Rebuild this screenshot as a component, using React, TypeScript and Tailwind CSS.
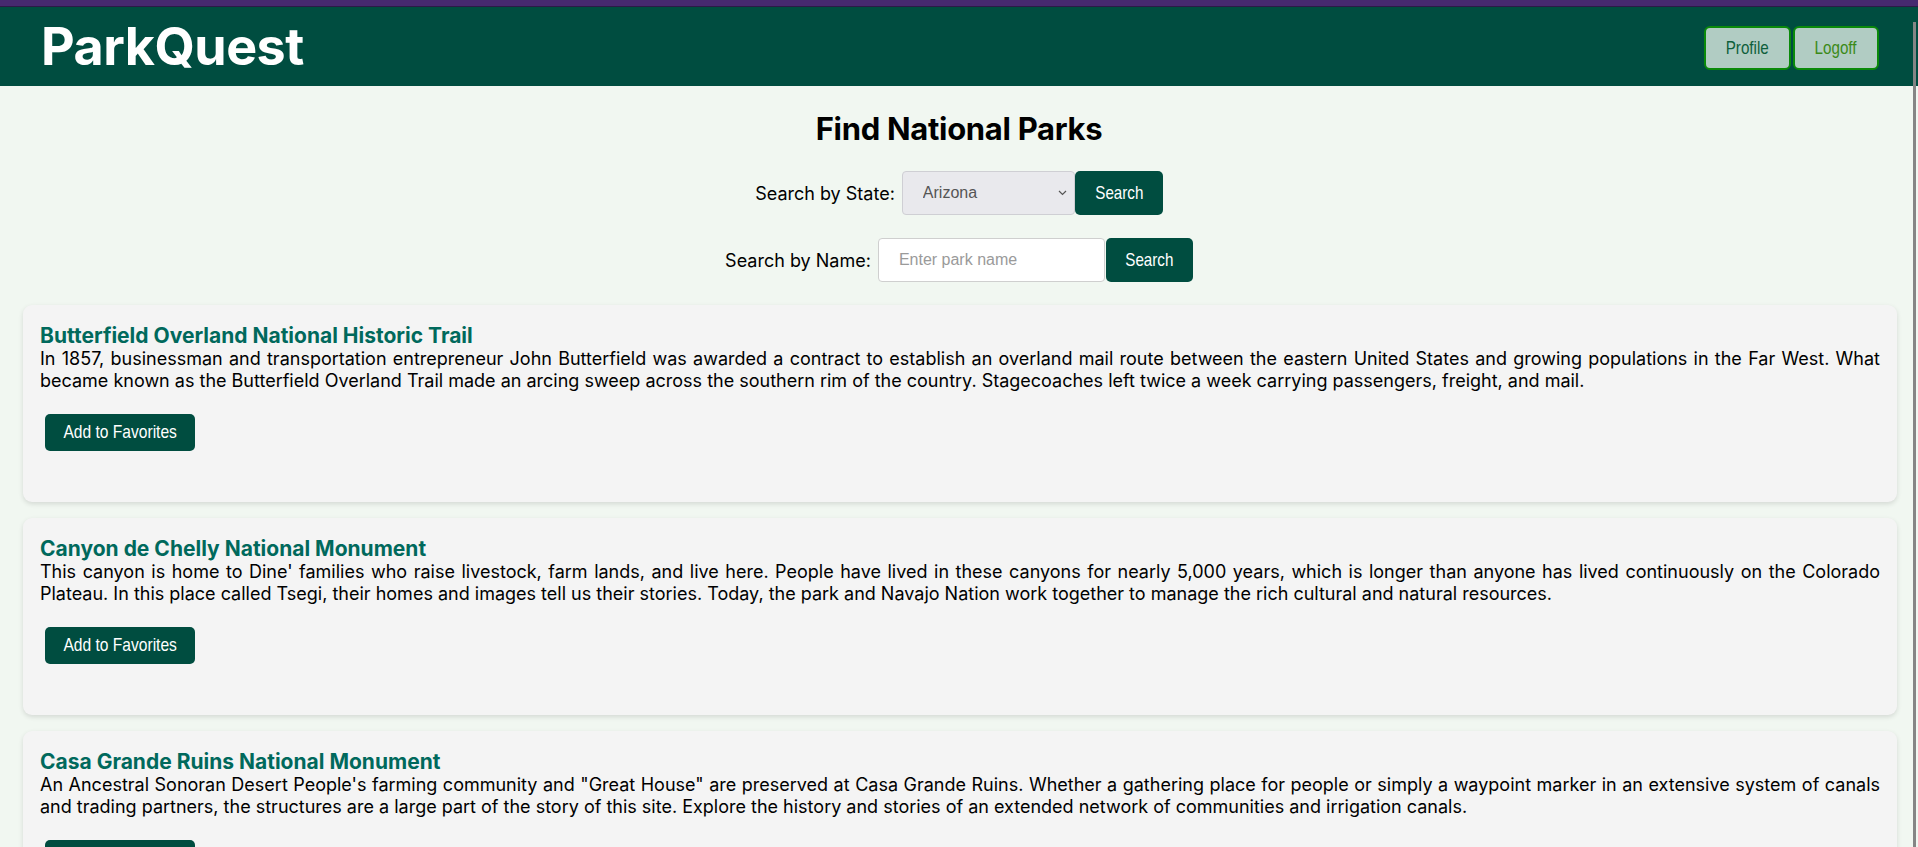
import { useState } from "react";

type Park = {
  name: string;
  description: string;
};

const PARKS: Park[] = [
  {
    name: "Butterfield Overland National Historic Trail",
    description:
      "In 1857, businessman and transportation entrepreneur John Butterfield was awarded a contract to establish an overland mail route between the eastern United States and growing populations in the Far West. What became known as the Butterfield Overland Trail made an arcing sweep across the southern rim of the country. Stagecoaches left twice a week carrying passengers, freight, and mail.",
  },
  {
    name: "Canyon de Chelly National Monument",
    description:
      "This canyon is home to Dine' families who raise livestock, farm lands, and live here. People have lived in these canyons for nearly 5,000 years, which is longer than anyone has lived continuously on the Colorado Plateau. In this place called Tsegi, their homes and images tell us their stories. Today, the park and Navajo Nation work together to manage the rich cultural and natural resources.",
  },
  {
    name: "Casa Grande Ruins National Monument",
    description:
      'An Ancestral Sonoran Desert People\'s farming community and "Great House" are preserved at Casa Grande Ruins. Whether a gathering place for people or simply a waypoint marker in an extensive system of canals and trading partners, the structures are a large part of the story of this site. Explore the history and stories of an extended network of communities and irrigation canals.',
  },
];

const STATES = ["Alabama", "Alaska", "Arizona", "Arkansas", "California", "Colorado"];

const sysFont = "font-['Liberation_Sans',Arial,sans-serif]";

// the buttons in the shot use a condensed system face; squeeze Arial to match
function Narrow({ children, size = "text-[18.5px]" }: { children: string; size?: string }) {
  return <span className={`inline-block scale-x-[0.82] ${sysFont} ${size}`}>{children}</span>;
}

function Header() {
  return (
    <header className="flex h-[79px] items-center justify-between bg-[#004d40] pl-[41px] pr-[39px]">
      <h1 className="text-[52px] font-bold leading-none tracking-[-0.5px] text-white">ParkQuest</h1>
      <div className="flex gap-[2px] pt-[3px]">
        <button className="h-[44px] w-[87px] rounded-[6px] border-2 border-[#0a8a0a] bg-[#b1ccc3] text-[#0e5f3c]">
          <Narrow>Profile</Narrow>
        </button>
        <button className="h-[44px] w-[86px] rounded-[6px] border-2 border-[#0a8a0a] bg-[#b1ccc3] text-[#3b8a18]">
          <Narrow>Logoff</Narrow>
        </button>
      </div>
    </header>
  );
}

function SearchForm() {
  const [state, setState] = useState("Arizona");
  const [name, setName] = useState("");

  return (
    <>
      <div className="mt-[23px] flex h-[44px] items-center justify-center">
        <label className="mr-[7px] text-[18px] text-black">Search by State:</label>
        <div className="relative h-[44px] w-[173px]">
          <select
            value={state}
            onChange={(e) => setState(e.target.value)}
            className={`h-full w-full appearance-none rounded-[4px] border border-[#cfcfd4] bg-[#e9e9ed] pl-[20px] text-[16px] text-[#555] outline-none ${sysFont}`}
          >
            {STATES.map((s) => (
              <option key={s}>{s}</option>
            ))}
          </select>
          <svg
            className="pointer-events-none absolute right-[8px] top-[19px]"
            width="9"
            height="6"
            viewBox="0 0 9 6"
            fill="none"
          >
            <path d="M1 1l3.5 3.5L8 1" stroke="#555" strokeWidth="1.2" />
          </svg>
        </div>
        <button className="h-[44px] w-[88px] rounded-[5px] bg-[#004d40] text-white">
          <Narrow>Search</Narrow>
        </button>
      </div>

      <div className="mt-[23px] flex h-[44px] items-center justify-center">
        <label className="mr-[7px] text-[18px] text-black">Search by Name:</label>
        <input
          value={name}
          onChange={(e) => setName(e.target.value)}
          placeholder="Enter park name"
          className={`h-[44px] w-[227px] rounded-[4px] border border-[#cfcfcf] bg-white pl-[20px] text-[16px] outline-none placeholder:text-[#9a9a9a] ${sysFont}`}
        />
        <button className="ml-px h-[44px] w-[87px] rounded-[5px] bg-[#004d40] text-white">
          <Narrow>Search</Narrow>
        </button>
      </div>
    </>
  );
}

function ParkCard({ park }: { park: Park }) {
  return (
    <div className="ml-[23px] mr-[21px] rounded-[9px] bg-[#f4f4f4] px-[17px] pb-[51px] pt-[18px] shadow-[0_2px_5px_rgba(0,0,0,0.12)]">
      <h3 className="text-[21px] font-bold leading-[25px] text-[#00695c]">{park.name}</h3>
      <p className="text-justify text-[18px] leading-[22px] text-black">{park.description}</p>
      <button className="ml-[5px] mt-[22px] h-[37px] w-[150px] rounded-[5px] bg-[#004d40] text-white">
        <Narrow size="text-[19px]">Add to Favorites</Narrow>
      </button>
    </div>
  );
}

export default function App() {
  return (
    <div className="relative h-[847px] overflow-hidden bg-[#f1f7f1] font-['Inter','Noto_Sans',sans-serif]">
      <div className="h-[6px] bg-[#46296f]" />
      <div className="h-px bg-[#2b1a47]" />
      <Header />

      <main className="flex flex-col">
        <h2 className="mt-[23px] text-center text-[31px] font-bold leading-[39px] tracking-[-0.3px] text-black">
          Find National Parks
        </h2>
        <SearchForm />

        <div className="mt-[23px] flex flex-col gap-4">
          {PARKS.map((p) => (
            <ParkCard key={p.name} park={p} />
          ))}
        </div>
      </main>

      {/* overlay scrollbar thumb */}
      <div className="absolute right-[2px] top-[22px] h-[825px] w-[3px] bg-[#858585]" />
    </div>
  );
}
